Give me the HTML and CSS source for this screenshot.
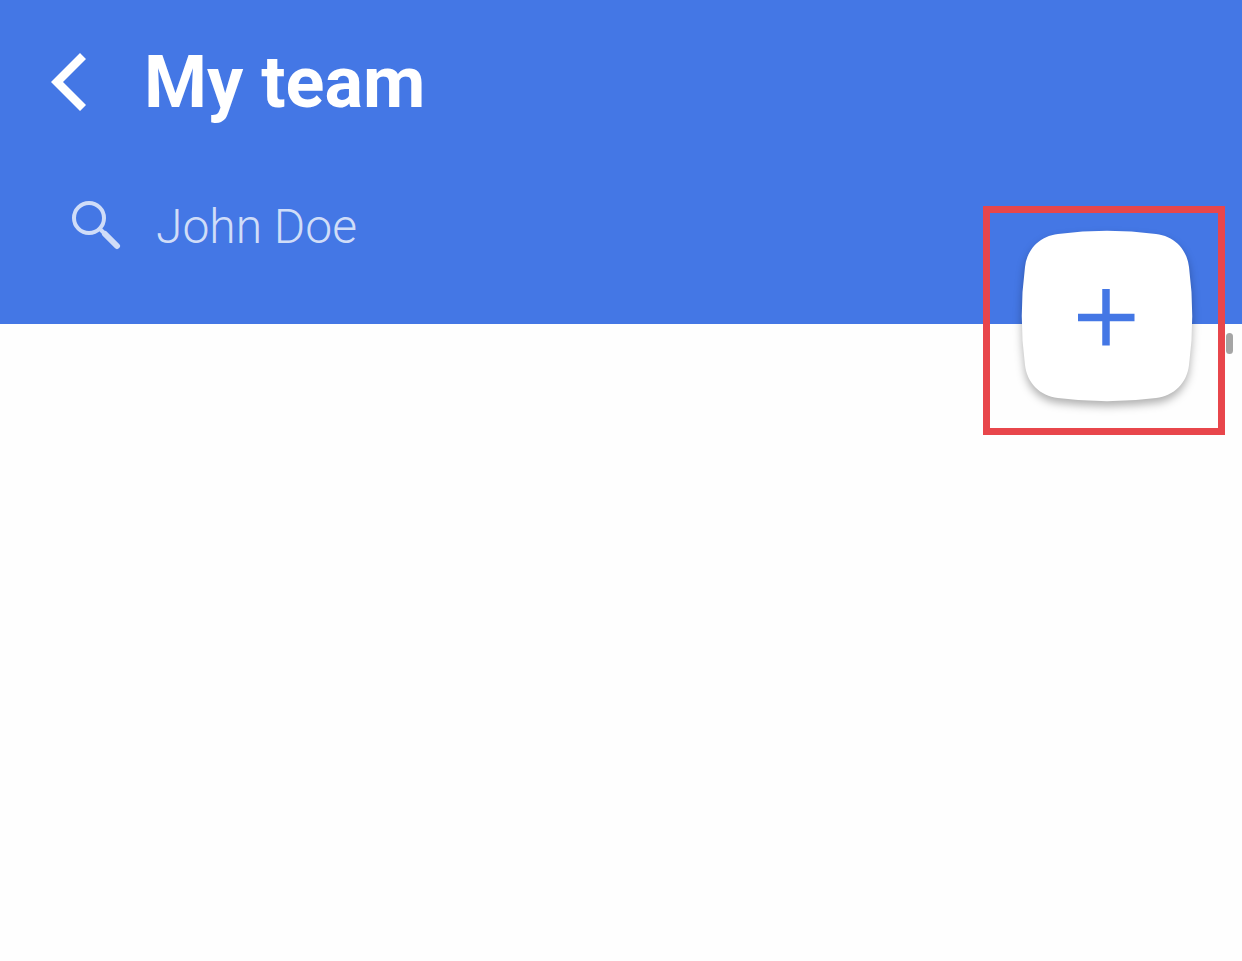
FILE: index.html
```
<!DOCTYPE html>
<html lang="en">
<head>
    <meta charset="UTF-8">
    <meta name="viewport" content="width=device-width, initial-scale=1.0">
    <title>My team</title>
    <link rel="stylesheet" href="styles.css">
</head>
<body>
    <header class="header">
        <div class="title-row">
            <button type="button" class="back-button" aria-label="Back">
                <svg width="36" height="60" viewBox="0 0 36 60">
                    <path d="M30 1L36 7L13 30L36 53L30 59L1 30Z" fill="#fff"/>
                </svg>
            </button>
            <h1 class="title">My team</h1>
        </div>
        <label class="search-row">
            <svg class="search-icon" width="50" height="50" viewBox="0 0 50 50" fill="none" stroke="#d0ddf8" stroke-linecap="round" aria-hidden="true">
                <circle cx="18" cy="18" r="15" stroke-width="4"/>
                <path d="M29 29L34 34" stroke-width="4"/>
                <path d="M34 34L46 46" stroke-width="6"/>
            </svg>
            <input type="text" class="search-input" placeholder="John Doe" aria-label="Search team">
        </label>
        <div class="highlight">
            <button type="button" class="add-button" aria-label="Add member">
                <svg width="172" height="172" viewBox="0 0 172 172">
                    <path class="add-shape" d="M37 4Q86 -2.5 135 4C153 6 166 19 168 37Q174.5 86 168 135C166 153 153 166 135 168Q86 174.5 37 168C19 166 6 153 4 135Q-2.5 86 4 37C6 19 19 6 37 4Z" fill="#fff"/>
                    <path d="M57 87.5H113.5M85 59V115.5" stroke="#4477e5" stroke-width="7.5"/>
                </svg>
            </button>
        </div>
        <div class="scroll-thumb"></div>
    </header>
    <main class="team-list"></main>
</body>
</html>
```

FILE: styles.css
```
* { box-sizing: border-box; }

body {
    margin: 0;
    background: #fefefe;
    font-family: Roboto, "Liberation Sans", sans-serif;
}

button {
    padding: 0;
    border: none;
    background: none;
    cursor: pointer;
}

svg { display: block; }

.header {
    position: relative;
    padding: 40px 50px 70px;
    background: #4477e5;
}

.title-row {
    display: flex;
    align-items: flex-start;
    gap: 58px;
}

.back-button { height: 84px; }

.title {
    margin: 0;
    padding-top: 1px;
    color: #fff;
    font-size: 72px;
    font-weight: 700;
    line-height: 84px;
}

.search-row {
    display: flex;
    align-items: center;
    gap: 35px;
    margin-top: 71px;
    padding-left: 21px;
}

.search-icon { flex: none; }

.search-input {
    width: 60%;
    height: 74px;
    margin: -8px 0;
    padding: 2px 0 0;
    border: none;
    outline: none;
    background: transparent;
    color: #d0ddf8;
    font-family: inherit;
    font-size: 48px;
    font-weight: 300;
}

.search-input::placeholder {
    color: #d0ddf8;
    opacity: 1;
}

/* add button sits across the lower edge of the header */
.highlight {
    position: absolute;
    right: 17px;
    bottom: -111px;
    padding: 17px 0 0 31px;
    width: 242px;
    height: 229px;
    border: 7px solid #e8464b;
}

.add-button {
    width: 172px;
    height: 172px;
}

.add-button svg { overflow: visible; }

.add-shape { filter: drop-shadow(0 5px 4px rgba(0, 0, 0, 0.3)); }

.scroll-thumb {
    position: absolute;
    right: 9px;
    bottom: -30px;
    width: 7px;
    height: 21px;
    border-radius: 4px;
    background: #a5a5a5;
}

.team-list { padding: 120px 50px; }
```
